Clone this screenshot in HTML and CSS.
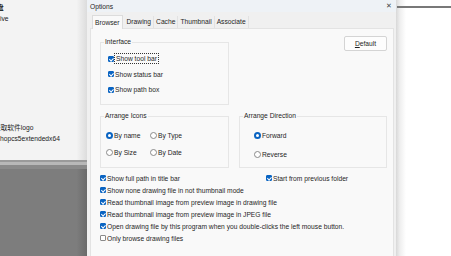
FILE: index.html
```html
<!DOCTYPE html>
<html lang="en">

<head>
  <meta charset="UTF-8" />
  <title>Options</title>
  <link rel="stylesheet" href="styles.css">
</head>

<body>
  <div class="desk-left">
    <div class="left-top">
      <div class="left-item first">盘</div>
      <div class="left-item">ive</div>
      <div class="left-item lower">提取软件logo</div>
      <div class="left-item">hopcs5extendedx64</div>
    </div>
    <div class="left-rule"></div>
    <div class="left-bottom"></div>
  </div>

  <div class="dialog">
    <div class="titlebar">
      <span>Options</span>
      <span class="close">✕</span>
    </div>

    <div class="tabs">
      <div class="tab active">Browser</div>
      <div class="tab">Drawing</div>
      <div class="tab">Cache</div>
      <div class="tab">Thumbnail</div>
      <div class="tab">Associate</div>
    </div>

    <div class="panel">
      <div class="row">
        <fieldset class="group interface">
          <legend>Interface</legend>
          <div class="check-list">
            <label class="opt"><span class="box on"></span><span class="focus">Show tool bar</span></label>
            <label class="opt"><span class="box on"></span>Show status bar</label>
            <label class="opt"><span class="box on"></span>Show path box</label>
          </div>
        </fieldset>
        <button class="btn-default"><u>D</u>efault</button>
      </div>

      <div class="row">
        <fieldset class="group arrange">
          <legend>Arrange Icons</legend>
          <div class="radio-grid">
            <label class="opt"><span class="radio on"></span>By name</label>
            <label class="opt"><span class="radio"></span>By Type</label>
            <label class="opt"><span class="radio"></span>By Size</label>
            <label class="opt"><span class="radio"></span>By Date</label>
          </div>
        </fieldset>
        <fieldset class="group direction">
          <legend>Arrange Direction</legend>
          <div class="radio-list">
            <label class="opt"><span class="radio on"></span>Forward</label>
            <label class="opt"><span class="radio"></span>Reverse</label>
          </div>
        </fieldset>
      </div>

      <div class="options">
        <label class="opt"><span class="box on"></span>Show full path in title bar</label>
        <label class="opt"><span class="box on"></span>Start from previous folder</label>
        <label class="opt wide"><span class="box on"></span>Show none drawing file in not thumbnail mode</label>
        <label class="opt wide"><span class="box on"></span>Read thumbnail image from preview image in drawing file</label>
        <label class="opt wide"><span class="box on"></span>Read thumbnail image from preview image in JPEG file</label>
        <label class="opt wide"><span class="box on"></span>Open drawing file by this program when you double-clicks the left mouse button.</label>
        <label class="opt wide"><span class="box"></span>Only browse drawing files</label>
      </div>
    </div>
  </div>

  <div class="desk-right">
    <div class="right-rule"></div>
  </div>
</body>

</html>
```

FILE: styles.css
```css
* {
  box-sizing: border-box;
}

body {
  margin: 0;
  width: 451px;
  height: 256px;
  display: flex;
  overflow: hidden;
  font-family: "Liberation Sans", "Noto Sans CJK SC", sans-serif;
  font-size: 6.7px;
  color: #1f1f1f;
  background: #fff;
}

/* desktop behind the dialog */
.desk-left {
  width: 87px;
  display: flex;
  flex-direction: column;
}

.left-top {
  height: 160px;
  background: linear-gradient(90deg, #f3f3f3 0%, #f3f3f3 88%, #dcdcdc 100%);
  padding-top: 2px;
}

.left-item {
  line-height: 11px;
  color: #222;
}

.left-item.first {
  margin-left: -3px;
  font-weight: bold;
}

.left-item.lower {
  margin-top: 98px;
  margin-left: -6px;
}

.left-rule {
  height: 9px;
  background: linear-gradient(180deg, #9a9a9a 0, #9a9a9a 2px, #b8b8b8 2px, #b8b8b8 5px, #8a8a8a 5px, #8a8a8a 9px);
}

.left-bottom {
  flex: 1;
  background: linear-gradient(90deg, #7d7d7d 0%, #7d7d7d 88%, #6a6a6a 100%);
}

.desk-right {
  flex: 1;
  background: linear-gradient(90deg, #d8d8d8 0, #efefef 4px, #fff 10px);
  padding-top: 6px;
}

.right-rule {
  height: 2px;
  margin-left: 1px;
  background: #787878;
}

/* dialog */
.dialog {
  width: 309px;
  background: #f0f0f0;
  display: flex;
  flex-direction: column;
}

.titlebar {
  height: 12px;
  background: #eef2f6;
  display: flex;
  align-items: center;
  justify-content: space-between;
  padding: 0 4px 0 3px;
}

.close {
  font-size: 7px;
  color: #444;
}

.tabs {
  display: flex;
  align-items: flex-end;
  height: 16px;
  padding-left: 5px;
}

.tab {
  height: 12px;
  line-height: 11px;
  padding: 0 2px;
  border-right: 1px solid #e2e2e2;
  background: #f0f0f0;
}

.tab.active {
  height: 14px;
  line-height: 13px;
  padding: 0 2px;
  margin-right: 2px;
  background: #f9f9f9;
  border: 1px solid #dcdcdc;
  border-bottom: none;
  position: relative;
  top: 1px;
}

.panel {
  flex: 1;
  margin: 0 2px 0 3px;
  background: #f9f9f9;
  border: 1px solid #e3e3e3;
  border-bottom: none;
  padding: 7px 0 0 9px;
}

.row {
  display: flex;
  align-items: flex-start;
}

.group {
  margin: 0;
  border: 1px solid #e6e6e6;
  padding: 0;
}

.group legend {
  padding: 0 1px;
  margin-left: 3px;
  line-height: 8px;
}

.interface {
  width: 129px;
  height: 67px;
  margin-top: 2px;
}

.check-list {
  display: flex;
  flex-direction: column;
  gap: 6.5px;
  padding: 8px 0 0 7px;
}

.btn-default {
  margin: 0 0 0 115px;
  width: 43px;
  height: 15px;
  padding: 0;
  border: 1px solid #d4d4d4;
  border-radius: 2px;
  background: #fdfdfd;
  font: inherit;
  color: #1f1f1f;
}

.arrange {
  width: 129px;
  height: 56px;
  margin-top: 7px;
}

.radio-grid {
  display: grid;
  grid-template-columns: 44px 44px;
  row-gap: 8px;
  padding: 11px 0 0 5px;
}

.direction {
  width: 148px;
  height: 56px;
  margin: 7px 0 0 10px;
}

.radio-list {
  display: flex;
  flex-direction: column;
  gap: 10px;
  padding: 11px 0 0 14px;
}

.options {
  display: grid;
  grid-template-columns: 166px auto;
  margin-top: 4px;
}

.options .wide {
  grid-column: 1 / 3;
}

.opt {
  display: flex;
  align-items: center;
  gap: 1px;
  height: 9px;
  line-height: 9px;
  white-space: nowrap;
}

.options .opt {
  height: 12px;
}

.box {
  width: 6px;
  height: 6px;
  border: 1px solid #8a8a8a;
  border-radius: 1px;
  background: #fff;
  position: relative;
}

.box.on {
  background: #0a64c2;
  border-color: #0a64c2;
}

.box.on::after {
  content: '';
  position: absolute;
  left: 1px;
  top: 0;
  width: 1.5px;
  height: 3px;
  border: solid #fff;
  border-width: 0 1px 1px 0;
  transform: rotate(45deg);
}

.radio {
  width: 7px;
  height: 7px;
  border: 1px solid #8a8a8a;
  border-radius: 50%;
  background: #fff;
}

.radio.on {
  border: 2px solid #0a64c2;
  background: #fff;
}

.focus {
  outline: 1px dotted #333;
  outline-offset: 0;
  padding: 0 1px;
}
```
